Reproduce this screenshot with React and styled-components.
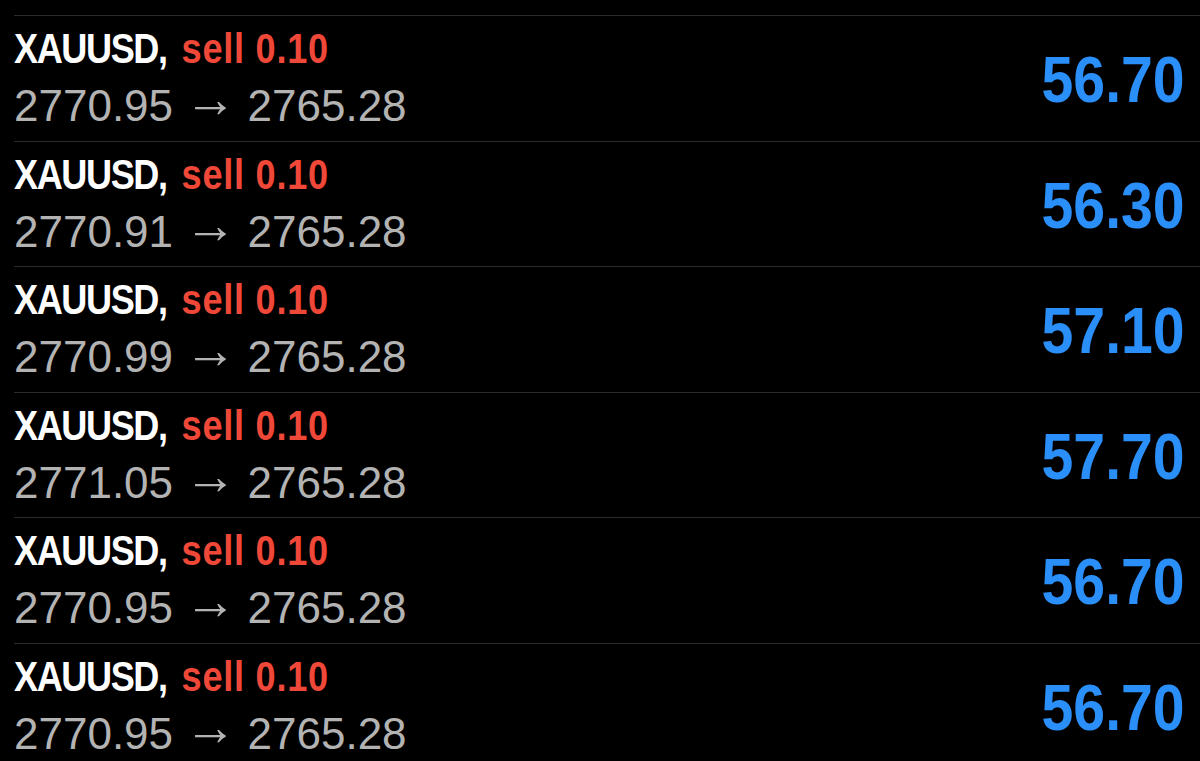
import React from 'react';
import styled, { createGlobalStyle } from 'styled-components';

const GlobalStyle = createGlobalStyle`
  html, body {
    margin: 0;
    padding: 0;
    background: #000;
    overflow: hidden;
  }
  body {
    font-family: "Liberation Sans", Arial, sans-serif;
  }
`

const List = styled.div`
  padding-top: 15px;
  padding-left: 14px;
  height: 761px;
  box-sizing: border-box;
`

const Row = styled.div`
  display: flex;
  align-items: center;
  justify-content: space-between;
  height: 125.5px;
  box-sizing: border-box;
  border-top: 1px solid #2b2b2d;
  padding-right: 15px;
`

const Info = styled.div`
  display: flex;
  flex-direction: column;
  align-self: flex-start;
  padding-top: 7px;
`

const Title = styled.div`
  font-size: 43px;
  line-height: 50px;
  font-weight: 700;
  white-space: nowrap;
  transform: scaleX(0.84);
  transform-origin: left center;
`

const Symbol = styled.span`
  color: #ffffff;
  letter-spacing: -1.7px;
`

const Side = styled.span`
  color: #f04838;
  letter-spacing: 0.9px;
  margin-left: 5px;
`

const Prices = styled.div`
  margin-top: 8px;
  font-size: 44px;
  line-height: 50px;
  color: #b3b3b3;
  white-space: nowrap;
`

const Arrow = styled.span`
  font-size: 52px;
  line-height: 0;
  vertical-align: 4px;
  margin: 0 -1px;
`

const Profit = styled.div`
  font-size: 65px;
  line-height: 65px;
  font-weight: 700;
  color: #2a8ff9;
  margin-top: 3px;
  transform: scaleX(0.88);
  transform-origin: right center;
`

const trades = [
  { open: '2770.95', close: '2765.28', profit: '56.70' },
  { open: '2770.91', close: '2765.28', profit: '56.30' },
  { open: '2770.99', close: '2765.28', profit: '57.10' },
  { open: '2771.05', close: '2765.28', profit: '57.70' },
  { open: '2770.95', close: '2765.28', profit: '56.70' },
  { open: '2770.95', close: '2765.28', profit: '56.70' },
]

export default function App() {
  return (
    <>
      <GlobalStyle />
      <List>
        {trades.map((t, i) => (
          <Row key={i}>
            <Info>
              <Title>
                <Symbol>XAUUSD,</Symbol>
                <Side> sell 0.10</Side>
              </Title>
              <Prices>
                {t.open} <Arrow>→</Arrow> {t.close}
              </Prices>
            </Info>
            <Profit>{t.profit}</Profit>
          </Row>
        ))}
      </List>
    </>
  );
}
